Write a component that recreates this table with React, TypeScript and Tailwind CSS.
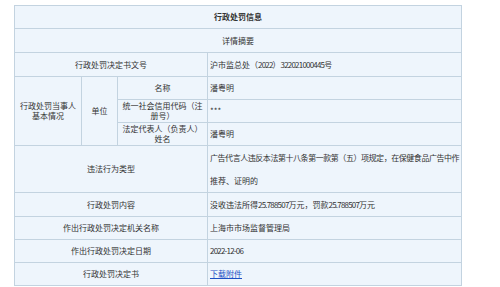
import React from "react";

const cell = "border border-[#c3d3e0] px-[2px] align-middle";

function N({ children }: { children: React.ReactNode }) {
  return <span className="tracking-[-0.8px]">{children}</span>;
}

export default function App() {
  return (
    <div
      className="w-[500px] h-[287px] bg-white pl-[14px] pt-[5px] text-[#333] text-[8px] leading-[10px]"
      style={{ fontFamily: '"Noto Sans CJK SC", "Noto Sans", sans-serif' }}
    >
      <table className="w-[447px] border-collapse table-fixed bg-[#eef5fc]">
        <colgroup>
          <col className="w-[67px]" />
          <col className="w-[36px]" />
          <col className="w-[90px]" />
          <col className="w-[254px]" />
        </colgroup>
        <tbody>
          <tr className="h-[23px]">
            <td colSpan={4} className={`${cell} text-center font-semibold`}>行政处罚信息</td>
          </tr>
          <tr className="h-[24px]">
            <td colSpan={4} className={`${cell} text-center`}>详情摘要</td>
          </tr>
          <tr className="h-[24px]">
            <td colSpan={3} className={`${cell} text-center`}>行政处罚决定书文号</td>
            <td className={`${cell} text-left`}>
              沪市监总处（<N>2022</N>）<N>322021000445</N>号
            </td>
          </tr>
          <tr className="h-[23px]">
            <td rowSpan={3} className={`${cell} text-center`}>行政处罚当事人基本情况</td>
            <td rowSpan={3} className={`${cell} text-center`}>单位</td>
            <td className={`${cell} text-center`}>名称</td>
            <td className={`${cell} text-left`}>潘粤明</td>
          </tr>
          <tr className="h-[23px]">
            <td className={`${cell} text-center`}>统一社会信用代码（注册号）</td>
            <td className={`${cell} text-left`}>***</td>
          </tr>
          <tr className="h-[23px]">
            <td className={`${cell} text-center`}>法定代表人（负责人）姓名</td>
            <td className={`${cell} text-left`}>潘粤明</td>
          </tr>
          <tr className="h-[46px]">
            <td colSpan={3} className={`${cell} text-center`}>违法行为类型</td>
            <td className={`${cell} text-left leading-[23px]`}>
              <span className="whitespace-nowrap tracking-[-0.45px]">广告代言人违反本法第十八条第一款第（五）项规定，在保健食品广告中作</span>
              <br />
              推荐、证明的
            </td>
          </tr>
          <tr className="h-[24px]">
            <td colSpan={3} className={`${cell} text-center`}>行政处罚内容</td>
            <td className={`${cell} text-left`}>
              没收违法所得<N>25.788507</N>万元，罚款<N>25.788507</N>万元
            </td>
          </tr>
          <tr className="h-[23px]">
            <td colSpan={3} className={`${cell} text-center`}>作出行政处罚决定机关名称</td>
            <td className={`${cell} text-left`}>上海市市场监督管理局</td>
          </tr>
          <tr className="h-[23px]">
            <td colSpan={3} className={`${cell} text-center`}>作出行政处罚决定日期</td>
            <td className={`${cell} text-left`}>
              <N>2022-12-06</N>
            </td>
          </tr>
          <tr className="h-[23px]">
            <td colSpan={3} className={`${cell} text-center`}>行政处罚决定书</td>
            <td className={`${cell} text-left`}>
              <a href="#" className="text-[#1d4fc4] underline">下载附件</a>
            </td>
          </tr>
        </tbody>
      </table>
    </div>
  );
}
